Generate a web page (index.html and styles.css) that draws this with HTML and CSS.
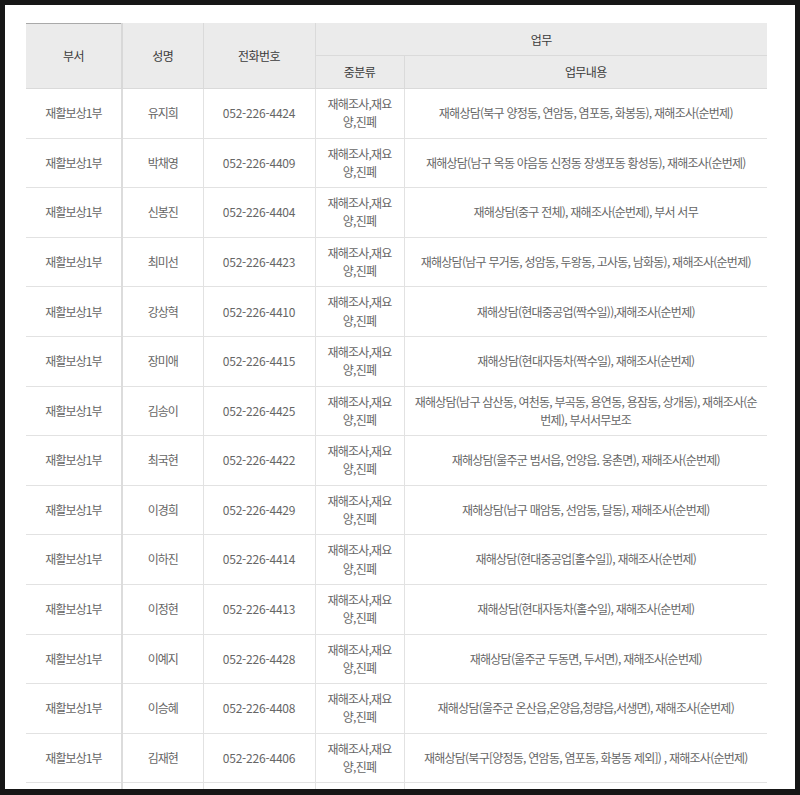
FILE: index.html
```html
<!DOCTYPE html>
<html lang="ko">
<head>
<meta charset="utf-8">
<title>재활보상1부</title>
<link rel="stylesheet" href="styles.css">
</head>
<body>
<div class="window">
<table class="staff">
  <colgroup>
    <col class="c-dept"><col class="c-name"><col class="c-tel"><col class="c-cat"><col class="c-desc">
  </colgroup>
  <thead>
    <tr class="h1">
      <th rowspan="2" class="first">부서</th>
      <th rowspan="2">성명</th>
      <th rowspan="2">전화번호</th>
      <th colspan="2" class="last">업무</th>
    </tr>
    <tr class="h2">
      <th>중분류</th>
      <th class="last">업무내용</th>
    </tr>
  </thead>
  <tbody>
    <tr><td class="dept">재활보상1부</td><td class="ko">유지희</td><td class="tel">052-226-4424</td><td class="cat">재해조사,재요<br>양,진폐</td><td class="desc">재해상담(북구 양정동, 연암동, 염포동, 화봉동), 재해조사(순번제)</td></tr>
    <tr><td class="dept">재활보상1부</td><td class="ko">박채영</td><td class="tel">052-226-4409</td><td class="cat">재해조사,재요<br>양,진폐</td><td class="desc">재해상담(남구 옥동 야음동 신정동 장생포동 황성동), 재해조사(순번제)</td></tr>
    <tr><td class="dept">재활보상1부</td><td class="ko">신봉진</td><td class="tel">052-226-4404</td><td class="cat">재해조사,재요<br>양,진폐</td><td class="desc">재해상담(중구 전체), 재해조사(순번제), 부서 서무</td></tr>
    <tr><td class="dept">재활보상1부</td><td class="ko">최미선</td><td class="tel">052-226-4423</td><td class="cat">재해조사,재요<br>양,진폐</td><td class="desc">재해상담(남구 무거동, 성암동, 두왕동, 고사동, 남화동), 재해조사(순번제)</td></tr>
    <tr><td class="dept">재활보상1부</td><td class="ko">강상혁</td><td class="tel">052-226-4410</td><td class="cat">재해조사,재요<br>양,진폐</td><td class="desc">재해상담(현대중공업(짝수일)),재해조사(순번제)</td></tr>
    <tr><td class="dept">재활보상1부</td><td class="ko">장미애</td><td class="tel">052-226-4415</td><td class="cat">재해조사,재요<br>양,진폐</td><td class="desc">재해상담(현대자동차(짝수일), 재해조사(순번제)</td></tr>
    <tr><td class="dept">재활보상1부</td><td class="ko">김송이</td><td class="tel">052-226-4425</td><td class="cat">재해조사,재요<br>양,진폐</td><td class="desc">재해상담(남구 삼산동, 여천동, 부곡동, 용연동, 용잠동, 상개동), 재해조사(순<br>번제), 부서서무보조</td></tr>
    <tr><td class="dept">재활보상1부</td><td class="ko">최국현</td><td class="tel">052-226-4422</td><td class="cat">재해조사,재요<br>양,진폐</td><td class="desc">재해상담(울주군 범서읍, 언양읍. 웅촌면), 재해조사(순번제)</td></tr>
    <tr><td class="dept">재활보상1부</td><td class="ko">이경희</td><td class="tel">052-226-4429</td><td class="cat">재해조사,재요<br>양,진폐</td><td class="desc">재해상담(남구 매암동, 선암동, 달동), 재해조사(순번제)</td></tr>
    <tr><td class="dept">재활보상1부</td><td class="ko">이하진</td><td class="tel">052-226-4414</td><td class="cat">재해조사,재요<br>양,진폐</td><td class="desc">재해상담(현대중공업[홀수일]), 재해조사(순번제)</td></tr>
    <tr><td class="dept">재활보상1부</td><td class="ko">이정현</td><td class="tel">052-226-4413</td><td class="cat">재해조사,재요<br>양,진폐</td><td class="desc">재해상담(현대자동차(홀수일), 재해조사(순번제)</td></tr>
    <tr><td class="dept">재활보상1부</td><td class="ko">이예지</td><td class="tel">052-226-4428</td><td class="cat">재해조사,재요<br>양,진폐</td><td class="desc">재해상담(울주군 두동면, 두서면), 재해조사(순번제)</td></tr>
    <tr><td class="dept">재활보상1부</td><td class="ko">이승혜</td><td class="tel">052-226-4408</td><td class="cat">재해조사,재요<br>양,진폐</td><td class="desc">재해상담(울주군 온산읍,온양읍,청량읍,서생면), 재해조사(순번제)</td></tr>
    <tr><td class="dept">재활보상1부</td><td class="ko">김재현</td><td class="tel">052-226-4406</td><td class="cat">재해조사,재요<br>양,진폐</td><td class="desc">재해상담(북구[양정동, 연암동, 염포동, 화봉동 제외]) , 재해조사(순번제)</td></tr>
    <tr><td class="dept">&nbsp;</td><td class="ko">&nbsp;</td><td class="tel">&nbsp;</td><td class="cat">&nbsp;<br>&nbsp;</td><td class="desc">&nbsp;</td></tr>
  </tbody>
</table>
</div>
</body>
</html>
```

FILE: styles.css
```css
html, body {
  margin: 0;
  padding: 0;
  background: #161616;
}

.window {
  box-sizing: border-box;
  width: 800px;
  height: 795px;
  border: 5px solid #161616;
  border-bottom-width: 6px;
  background: #ffffff;
  padding: 18px 0 0 21px;
  overflow: hidden;
  font-family: "Noto Sans CJK KR", "Noto Sans", sans-serif;
}

.staff {
  border-collapse: collapse;
  table-layout: fixed;
  width: 741px;
  font-size: 12px;
}

.c-dept { width: 96px; }
.c-name { width: 81px; }
.c-tel { width: 112px; }
.c-cat { width: 89px; }
.c-desc { width: 363px; }

.staff th {
  background: #ebebeb;
  color: #3c3c3c;
  font-weight: 400;
  text-align: center;
  vertical-align: middle;
  padding: 0;
  letter-spacing: -0.6px;
  border: 1px solid #dadada;
  line-height: 16px;
}

.staff .h1 th { height: 31px; border-top: 1px solid #ebebeb; }
.staff .h2 th { height: 32px; }
.staff .h1 th.first { border-top: 1px solid #a9a9a9; border-left: 0; border-right: 2px solid #d8d8d8; }
.staff th.last { border-right: 0; }

.staff td {
  color: #666666;
  text-align: center;
  vertical-align: middle;
  padding: 6px 4px;
  line-height: 18.3px;
  border-bottom: 1px solid #e2e2e2;
  border-right: 1px solid #e2e2e2;
  white-space: nowrap;
  letter-spacing: -1.1px;
}

.staff td.dept {
  border-right: 2px solid #dcdcdc;
  letter-spacing: -0.9px;
}

.staff td.tel {
  letter-spacing: -0.2px;
}

.staff td.cat {
  letter-spacing: -0.8px;
}

.staff td.desc {
  border-right: 0;
  letter-spacing: -0.75px;
}
```
